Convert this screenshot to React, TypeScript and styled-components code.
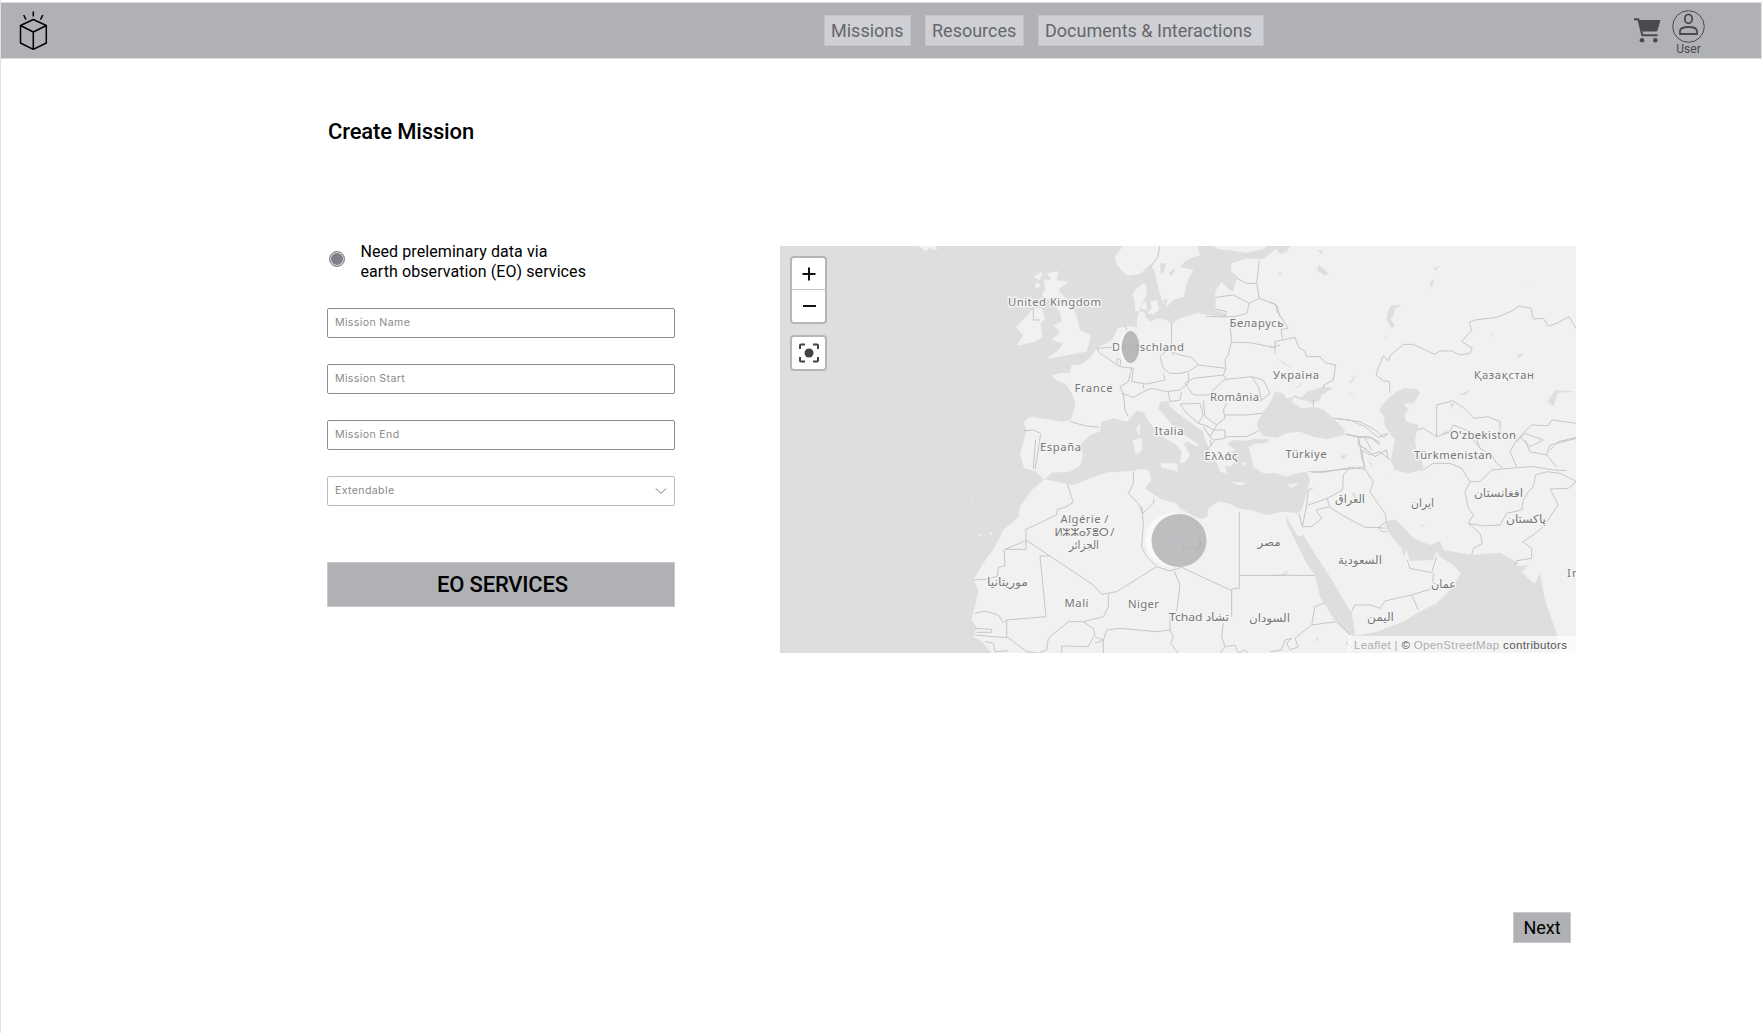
import React from "react";
import styled, { createGlobalStyle } from "styled-components";

const GlobalStyle = createGlobalStyle`
  * { box-sizing: border-box; }
  body { margin: 0; background: #fff; font-family: Roboto, "Liberation Sans", sans-serif; color: #000; }
  button { font: inherit; color: inherit; }
`;

const Page = styled.div`
  width: 1764px;
  height: 1033px;
  overflow: hidden;
  border-left: 1px solid #e2e2e4;
  padding-top: 2px;
`;

const Header = styled.header`
  width: 1761px;
  height: 57px;
  display: grid;
  grid-template-columns: 823px 1fr auto;
  align-items: start;
  background: #b0b1b5;
  border: 1px solid #dcdde0;
  border-left: 0;
`;

const Logo = styled.svg`
  margin: 7px 0 0 17px;
  width: 30px;
  height: 42px;
  fill: none;
  stroke: #000;
  stroke-width: 1.5;
  stroke-linejoin: round;
`;

const Nav = styled.nav`
  display: flex;
  gap: 14px;
  padding-top: 12px;
`;

const NavButton = styled.button<{ $width: number }>`
  width: ${(p) => p.$width}px;
  height: 31px;
  padding: 0 0 0 6px;
  border: 1px solid #c3c4c8;
  background: #cfd0d5;
  color: #66676b;
  font-size: 18px;
  line-height: 29px;
  text-align: left;
  white-space: nowrap;
`;

const Account = styled.div`
  display: flex;
  gap: 11px;
  padding: 7px 55px 0 0;
  color: #4a4a4d;
`;

const CartIcon = styled.svg`
  width: 27px;
  height: 26px;
  margin-top: 7px;
`;

const User = styled.div`
  width: 33px;
  margin-right: 1px;
  display: flex;
  flex-direction: column;
  align-items: center;
  font-size: 12px;
  line-height: 12px;
`;

const UserIcon = styled.svg`
  width: 33px;
  height: 33px;
  fill: none;
  stroke: #4a4a4d;
`;

const Main = styled.main`
  padding: 60px 0 0 326px;
  display: flex;
  flex-direction: column;
`;

const Title = styled.h1`
  margin: 0 0 0 1px;
  font-size: 22px;
  font-weight: 500;
  line-height: 26px;
  letter-spacing: -0.14px;
`;

const Columns = styled.div`
  display: flex;
  align-items: flex-start;
  gap: 105px;
  margin-top: 101px;
`;

const Form = styled.form`
  width: 348px;
  display: flex;
  flex-direction: column;
`;

const Option = styled.label`
  display: flex;
  gap: 16px;
  height: 16px;
  margin-bottom: 46px;
  padding-left: 1.5px;
  font-size: 16px;
  line-height: 20px;
  letter-spacing: 0.08px;
`;

const OptionText = styled.span`
  margin-top: -4px;
  white-space: nowrap;
`;

const Radio = styled.span`
  flex: none;
  width: 16px;
  height: 16px;
  margin-top: 5px;
  border: 1px solid #85868b;
  border-radius: 50%;
  background: #7e8085;
  box-shadow: inset 0 0 0 1px #dfdfe2;
`;

const Field = styled.div<{ $soft?: boolean }>`
  height: 30px;
  margin-bottom: 26px;
  padding: 0 7px 1px 7px;
  display: flex;
  align-items: center;
  justify-content: space-between;
  border: 1px solid ${(p) => (p.$soft ? "#bdbdc1" : "#8c8c93")};
  border-radius: 2px;
  color: #8a8a8a;
  font: 10.6px/16px Inter, "Open Sans", sans-serif;
  letter-spacing: 0.36px;
`;

const Services = styled.button`
  height: 45px;
  margin-top: 30px;
  padding: 0 0 0 3px;
  border: 1px solid #c8c9cc;
  background: #b0b1b5;
  font-size: 22px;
  font-weight: 500;
  letter-spacing: -0.2px;
`;

const MapBox = styled.section`
  width: 796px;
  height: 407px;
  position: relative;
  overflow: hidden;
  background: #dedede;
`;

const MapDrawing = styled.svg`
  display: block;
  width: 796px;
  height: 407px;
`;

const Controls = styled.div`
  position: absolute;
  top: 10px;
  left: 10px;
  display: flex;
  flex-direction: column;
  gap: 11px;
`;

const ControlGroup = styled.div`
  width: 37px;
  border: 2px solid #b6b6b6;
  border-radius: 4px;
  background: #fff;
`;

const Control = styled.button<{ $line?: boolean; $height: number }>`
  display: grid;
  place-items: center;
  width: 33px;
  height: ${(p) => p.$height}px;
  padding: 0;
  border: 0;
  border-bottom: ${(p) => (p.$line ? "1px solid #c6c6c6" : "0")};
  background: none;
`;

const Attribution = styled.div`
  position: absolute;
  right: 0;
  bottom: 0;
  width: 228px;
  height: 17px;
  padding-left: 6px;
  background: rgba(255, 255, 255, 0.65);
  color: #555;
  font: 11.5px/18px "Liberation Sans", sans-serif;
  letter-spacing: 0.35px;
  white-space: nowrap;
`;

const Faint = styled.span`
  color: #adadad;
`;

const NextButton = styled.button`
  width: 58px;
  height: 31px;
  margin: 259px 0 0 1186px;
  padding: 0;
  border: 1px solid #c8c9cc;
  background: #b0b1b5;
  font-size: 18px;
`;

const Place = styled.text`
  font-family: "Noto Sans", "DejaVu Sans", sans-serif;
  font-size: 11.3px;
  fill: #777;
  stroke: #f4f4f4;
  stroke-width: 2.8px;
  stroke-linejoin: round;
  paint-order: stroke;
`;

/* Label, left edge, baseline, drawn width */
const places: [string, number, number, number][] = [
  ["United Kingdom", 1008, 306, 93],
  ["Deutschland", 1112, 351, 72],
  ["France", 1074.5, 391.5, 38],
  ["España", 1040, 451, 41],
  ["Italia", 1154.5, 434.5, 29],
  ["Беларусь", 1229.5, 327, 54],
  ["Україна", 1273, 379, 46],
  ["România", 1210, 401, 49],
  ["Ελλάς", 1204.5, 460, 33],
  ["Türkiye", 1285.5, 458, 41],
  ["Қазақстан", 1474, 379, 60],
  ["O‘zbekiston", 1450, 438.5, 66],
  ["Türkmenistan", 1414, 458.5, 78],
  ["Algérie /", 1060.5, 523, 48],
  ["ⵍⵣⵣⴰⵢⴻⵔ /", 1054.5, 536, 60],
  ["الجزائر", 1069, 549, 30],
  ["موريتانيا", 987, 586, 41],
  ["Mali", 1064.5, 607, 24],
  ["Niger", 1128, 607.5, 31],
  ["Tchad تشاد", 1169, 621, 60],
  ["السودان", 1249, 621.5, 41],
  ["مصر", 1257.5, 546, 23],
  ["ليبيا", 1181, 549, 21],
  ["العراق", 1335, 502.5, 30],
  ["ايران", 1411, 507, 23],
  ["افغانستان", 1474, 497, 49],
  ["پاكستان", 1506, 523, 40],
  ["السعودية", 1338, 564, 44],
  ["عمان", 1431, 588, 25],
  ["اليمن", 1367, 621, 27],
  ["In", 1567, 577, 12],
];

const LAND = "#f1f1f1";
const SEA = "#dedede";

const frames = {
  europe: "translate(980 240) scale(.33333)",
  steppe: "translate(1270 240) scale(.33333)",
  africa: "translate(960 440) scale(.33333)",
  arabia: "translate(1270 440) scale(.33333)",
  medit: "translate(1120 370) scale(.33333)",
};

type Shape = { frame: keyof typeof frames; d: string };

const mainland: Shape[] = [
  { frame: "europe", d: "M1800 10L900 18 870 40 850 58 800 55 755 70 752 92 775 110 766 128 760 155 742 145 725 125 705 155 708 190 703 210 735 220 735 233 690 226 650 219 600 235 574 254 560 240 530 235 512 245 497 232 492 216 465 213 463 180 458 165 465 150 492 128 500 140 499 165 482 195 478 215 470 240 472 262 440 258 412 265 397 300 350 325 330 355 300 375 275 375 270 400 240 398 215 408 232 422 258 432 275 460 287 490 273 540 250 545 200 537 150 530 130 548 140 570 132 600 120 640 132 685 165 692 190 718 1800 720Z" },
  { frame: "africa", d: "M255 118L245 125 215 150 180 200 175 232 130 270 105 320 70 370 40 420 55 450 47 490 35 540 50 562 40 590 65 605 100 645 1860 645 1860 110Z" },
];

const seas: Shape[] = [
  { frame: "medit", d: "M-225 328L-205 308-150 305-118 285-112 255-120 225-90 195-60 185-55 155-20 145 20 155 50 123 70 127 90 160 115 190 145 210 170 225 185 245 180 280 195 277 210 255 200 235 190 220 205 215 230 230 235 222 200 200 165 180 145 150 115 115 120 95 145 92 150 110 180 135 215 160 250 185 255 210 270 240 290 280 300 305 320 312 315 285 330 290 345 275 320 250 345 240 320 220 345 210 380 212 400 207 450 208 440 218 405 222 385 230 395 260 400 290 430 310 470 310 500 320 530 310 560 305 570 330 560 370 545 420 530 430 490 425 440 435 400 422 355 415 325 400 295 395 265 415 262 440 245 447 215 435 180 415 170 400 130 390 95 370 75 355 95 330 85 300 60 297 40 303-40 307-90 325-140 345-190 335Z" },
  { frame: "medit", d: "M415 180L410 160 430 125 450 100 465 65 490 70 500 85 523 80 515 95 545 115 580 110 610 120 640 145 675 180 670 195 620 207 580 200 540 185 500 190 470 203 430 198Z" },
  { frame: "medit", d: "M545 85L560 65 610 50 640 53 605 75 600 90 575 100Z" },
  { frame: "steppe", d: "M360 470L380 455 402 445 440 447 450 460 430 490 400 490 415 510 403 525 410 545 445 555 435 600 440 640 455 660 460 690 415 700 375 690 362 660 375 600 345 560 342 530 328 510 345 485Z" },
  { frame: "arabia", d: "M50 225L60 250 85 290 100 285 140 350 180 410 215 470 245 520 258 595 235 580 190 535 150 470 135 405 110 370 75 300 50 250Z" },
  { frame: "arabia", d: "M345 245L375 238 400 260 430 295 480 315 510 303 520 330 605 345 690 338 720 355 745 370 735 378 775 376 755 397 795 432 810 400 825 480 862 588 862 645 235 645 245 590 320 575 400 545 440 520 500 490 530 460 555 430 572 400 550 375 510 350 500 333 490 360 420 363 410 330 400 350 395 325 370 295 350 270Z" },
];

const islands: Shape[] = [
  { frame: "europe", d: "M435 10L405 50 410 75 440 107 480 102 512 72 523 95 535 145 545 180 560 202 580 180 612 170 622 125 640 90 600 80 620 60 660 45 650 10Z" },
  { frame: "europe", d: "M690 10L715 28 740 30 800 38 850 28 870 10Z" },
  { frame: "europe", d: "M235 93L200 100 215 120 192 118 195 150 185 165 210 180 238 172 220 195 240 215 245 245 220 255 240 275 215 300 250 310 235 330 200 357 265 345 320 335 333 285 300 270 290 225 260 180 235 150 266 125 230 120Z" },
  { frame: "europe", d: "M160 205L185 205 195 235 182 250 187 290 165 305 110 317 130 285 108 262 135 235Z" },
  { frame: "europe", d: "M160 110L187 93 180 120ZM170 125L183 138 165 147ZM480 192L498 185 503 212 484 205ZM510 185L530 180 538 210 520 222ZM515 205L525 225 500 219Z" },
  { frame: "medit", d: "M62 158L58 200 48 175ZM65 203L67 240 48 255 38 210ZM120 280L170 280 175 305 125 293ZM330 335L380 338 360 347ZM497 345L537 338 518 354ZM365 275L382 278 372 290Z" },
  { frame: "africa", d: "M55 285l10-5-5 10zM87 281l12-8-4 12zM25 272l6 5-8-2zM35 183l7 2-5 4z" },
  { frame: "europe", d: "M-190 16l55 0 8 10-10 5-12-8-14 10-10-8z" },
];

const lakes: Shape[] = [
  { frame: "steppe", d: "M15 18L60 18 50 35 30 42ZM148 75L175 100 165 108 140 90ZM143 30l18 2-8 10zM22 100l15-3-5 12zM360 197l35-3-20 12-5 22-8 10 13 20-10 6-16-25 5-25zM345 298l10-23-5 20zM462 152l25-12 5-22-12 10 3 15zM490 88l18-12-8 15zM235 430l28-30-18 28zM232 455l32 16-20-7zM740 345l20-5-12 16zM662 285l10-8-4 12zM832 485l25-35 60 5-55 3-10 40zM565 465l35-15-12 16zM75 445l25-18-15 16zM20 355l50 30-30-12zM517 582l12-14 6 12zM540 490l12 0-5 20zM770 126l8 2-6 3z" },
  { frame: "europe", d: "M540 70l18 0-6 25-10 10zM565 100l22-15-12 24zM650 140l8-30 5-5-8 35zM550 180l12-3-5 25z" },
  { frame: "arabia", d: "M210 48l22-6-12 15zM245 80l10-4-5 10zM295 65l8 3 7 22zM440 130l20-3zM440 155l15 1zM500 155l12-6zM450 253l14 4-8 4zM30 408l30-20-15 18zM245 160l10-3 4 30zM135 600l12-8-4 12z" },
];

const borders: Shape[] = [
  { frame: "europe", d: "M540 18L533 50 513 80M838 60L830 130 800 130 770 115M830 130L838 175 808 190 760 165 708 172M808 190L800 220 765 230 735 230 678 230M703 207L740 215 735 230M838 175L890 195 900 230M765 230L750 255 755 300 745 345 735 360 738 385 730 405M755 307L810 308 880 322 900 315M574 250L575 315 580 345M575 315L540 350 550 385 570 400 600 400 625 395 655 375 635 352 600 345 575 335M655 375L738 385M550 400L555 420 500 432 455 425 460 385 420 380 360 340 350 325M350 325L400 322M455 385L445 425 420 440 430 460 435 510 445 530M425 460L460 472 500 450 515 445 560 455 600 450 625 430 625 398M490 430L490 445M615 430L640 415 730 405 738 418 815 410 850 420 870 460 840 485M615 430L640 465 685 465 725 425 738 418M565 455L570 485 600 480 605 455M600 492L660 490 670 525 655 550 620 520 600 492M670 480L675 530 710 555 735 535 730 510 740 490M735 525L800 525 845 520M655 550L685 560 700 570 735 570 735 595 700 600 690 590 710 555M690 590L670 560M735 590L800 590 835 573M690 600L695 620M815 410L835 440 845 480M270 545L320 558 358 562M160 205L160 240 180 240M435 255L440 270M410 370L412 355 422 360 420 380M132 572L160 570 182 580 175 630 170 660 165 688" },
  { frame: "steppe", d: "M0 185L18 195 22 215 55 265 33 268 38 300 75 292 85 320 105 335 110 350 150 350 165 368 197 375 190 420 162 435 160 445M38 300L15 305 15 340M0 322L15 322M360 458L358 425 340 422 318 405 330 370 340 348 357 362 360 347 400 313 430 313 493 343 510 333 545 333 570 345 600 340 607 325 575 305 592 285 605 272 598 247 615 240 680 232 725 213 748 198 783 205 790 237 820 235 835 258 860 250 897 230 920 268M500 590L500 495 548 482 580 503 612 535 655 530 690 545 690 573M440 570L460 565 500 590 540 575 550 555 600 575 620 600 630 625M70 468L100 478M130 480L130 498M195 535L270 545 315 570 340 592 355 580M228 582L265 590 300 590 330 608M265 590L265 615 290 628M740 600L785 555 835 557 845 540 920 550M740 605L765 580 820 600 780 620 750 590M840 630L865 605 920 592" },
  { frame: "africa", d: "M227 0L220 85M322 132L340 187 315 202 292 208 290 225 198 268 198 328 135 328M135 328L190 305 198 300M198 300L400 435 425 463 470 455 590 380 630 393 665 382 815 452M132 328L135 378 115 382 112 408 85 418 40 420M520 95L520 130 505 160 535 190 548 220 580 190 582 178M545 200L550 250 545 320 560 350 590 380M240 348L268 348M240 348L258 530 140 540 130 548 115 525 75 513 45 520M445 460L445 500 430 530 370 545M838 215L838 445 815 447 815 530M838 406L970 406M643 393L660 435 650 515 630 530 630 570 590 575 480 565 440 570 430 600 405 590 400 565 370 545 325 545 265 595 260 630 235 640 200 635 145 593 100 590 45 585M140 540L140 590M630 570L640 590 632 610 655 640M400 590L385 620 305 618 305 640M405 610L430 600 430 640M790 550L785 590 795 620 780 640M45 565L95 568 95 577 50 577M795 620L825 615 835 640 855 630 865 640M75 605L100 610 105 635 145 632M765 0L740 30" },
  { frame: "arabia", d: "M115 95L160 97 240 83 285 88 310 125 300 155 320 185 345 220 350 245 325 262 285 262 215 225 178 200 172 175 115 195M240 83L220 105 218 150 172 175M178 200L138 210 155 235 125 260 97 260 87 220M97 260L110 195 115 150 128 145M285 88L275 30M275 30L300 45 330 35 360 60M460 90L490 70 540 70 575 85 600 125 630 125 665 90 740 83 790 80 850 90 890 92M600 125L585 155 595 205 610 225 595 250 640 258 690 255 710 220 755 210 760 180 775 155 790 140 797 105 830 95 870 100 920 125M920 125L895 145 840 147 865 195 820 260 790 285 758 305 785 325 785 355 740 362 735 375M595 250L630 280 637 310 610 325 605 345M420 385L485 398 500 350M420 385L412 360M490 400L488 445 425 465 345 483 330 505 300 495 255 495 245 515M425 465L445 510M345 265L325 262 335 275 350 275M0 406L135 406M245 590L230 610 265 640M165 488L135 500 125 555 200 545 240 585M125 555L75 595 85 620 60 630 50 610 65 595 45 600 35 630 0 635M610 0L630 25 665 45 680 70 700 85M740 0L720 35 740 80M765 0L780 35 830 45 860 80M830 45L840 15 920 -5" },
  { frame: "medit", d: "M640 145L690 150 735 170 775 203 800 190M675 193L715 202 755 205 780 225M715 202L720 225 765 260 800 240 803 265M720 225L725 265 735 290 690 297 650 300 580 307M735 205L755 240" },
];

const Shapes = ({ items, ...paint }: { items: Shape[] } & React.SVGProps<SVGPathElement>) => (
  <>
    {items.map((s, i) => (
      <path key={i} d={s.d} transform={frames[s.frame]} strokeLinejoin="round" {...paint} />
    ))}
  </>
);

const WorldMap = () => (
  <MapDrawing viewBox="780 246 796 407">
    <Shapes items={mainland} fill={LAND} />
    <Shapes items={seas} fill={SEA} />
    <Shapes items={islands} fill={LAND} />
    <Shapes items={lakes} fill={SEA} />
    <Shapes items={borders} fill="none" stroke="#c6c6c6" strokeWidth={3} />
    {places.map(([name, x, y, width]) => (
      <Place key={name} x={x} y={y} textLength={width} lengthAdjust={/[\u0600-\u06ff]/.test(name) ? "spacingAndGlyphs" : "spacing"}>
        {name}
      </Place>
    ))}
    <ellipse cx="1128" cy="347" rx="9" ry="15.5" fill="#fff" opacity=".6" />
    <ellipse cx="1130.5" cy="347" rx="8.8" ry="16" fill="#b0b0b3" opacity=".88" />
    <ellipse cx="1172" cy="540" rx="26.5" ry="27" fill="#fff" opacity=".6" />
    <ellipse cx="1179" cy="540.5" rx="27.5" ry="26.5" fill="#b4b4b7" opacity=".86" />
  </MapDrawing>
);

export default function App() {
  return (
    <Page>
      <GlobalStyle />
      <Header>
        <Logo viewBox="18 10 30 42">
          <path d="M33.3 19.5L46.3 25.5V43L33.3 49.3 20.5 43V25.5ZM20.5 25.5L33.3 32 46.3 25.5M33.3 32V49M33.3 11.5V16.5M23.7 15L26 19.7M42.8 15L40.5 19.7" />
        </Logo>
        <Nav>
          <NavButton $width={87}>Missions</NavButton>
          <NavButton $width={99}>Resources</NavButton>
          <NavButton $width={226}>Documents &amp; Interactions</NavButton>
        </Nav>
        <Account>
          <CartIcon viewBox="0 0 27 26" fill="none" stroke="#4a4a4d" strokeWidth="2">
            <path d="M0 2.2H4.4L8.3 18.2H23.5" strokeLinejoin="round" />
            <path d="M5 3H25.5Q26.5 3 26.2 4L23.5 13.5Q23.2 14.5 22 14.5H8Z" fill="#4a4a4d" stroke="none" />
            <circle cx="8" cy="23.3" r="2.3" fill="#4a4a4d" stroke="none" />
            <circle cx="21.3" cy="23.3" r="2.3" fill="#4a4a4d" stroke="none" />
          </CartIcon>
          <User>
            <UserIcon viewBox="0 0 33 33">
              <circle cx="16.5" cy="16.5" r="15.8" strokeWidth="1" />
              <ellipse cx="16.5" cy="8.8" rx="3.7" ry="4.5" strokeWidth="1.8" />
              <path d="M8 24V21.5C8 18.2 12 17 16.5 17S25 18.2 25 21.5V24Z" strokeWidth="1.8" />
            </UserIcon>
            User
          </User>
        </Account>
      </Header>
      <Main>
        <Title>Create Mission</Title>
        <Columns>
          <Form>
            <Option>
              <Radio />
              <OptionText>
                Need preleminary data via
                <br />
                earth observation (EO) services
              </OptionText>
            </Option>
            <Field>Mission Name</Field>
            <Field>Mission Start</Field>
            <Field>Mission End</Field>
            <Field $soft>
              Extendable
              <svg width="12" height="8" viewBox="0 0 12 8" fill="none" stroke="#77777c">
                <path d="M1 1.5L6 6.5 11 1.5" />
              </svg>
            </Field>
            <Services type="button">EO SERVICES</Services>
          </Form>
          <MapBox>
            <WorldMap />
            <Controls>
              <ControlGroup>
                <Control $line $height={32}>
                  <svg width="14" height="14" stroke="#111" strokeWidth="2">
                    <path d="M0.5 7H13.5M7 0.5V13.5" />
                  </svg>
                </Control>
                <Control $height={32}>
                  <svg width="14" height="14" stroke="#111" strokeWidth="2">
                    <path d="M1 7H14" />
                  </svg>
                </Control>
              </ControlGroup>
              <ControlGroup>
                <Control $height={32}>
                  <svg width="22" height="20" viewBox="0 0 22 20" fill="none" stroke="#444" strokeWidth="2">
                    <path d="M7 1.5H3Q2 1.5 2 2.5V6M15 1.5H19Q20 1.5 20 2.5V6M7 18.5H3Q2 18.5 2 17.5V14M15 18.5H19Q20 18.5 20 17.5V14" />
                    <circle cx="11" cy="10" r="4.5" fill="#444" stroke="none" />
                  </svg>
                </Control>
              </ControlGroup>
            </Controls>
            <Attribution>
              <Faint>Leaflet |</Faint> © <Faint>OpenStreetMap</Faint> contributors
            </Attribution>
          </MapBox>
        </Columns>
        <NextButton>Next</NextButton>
      </Main>
    </Page>
  );
}
